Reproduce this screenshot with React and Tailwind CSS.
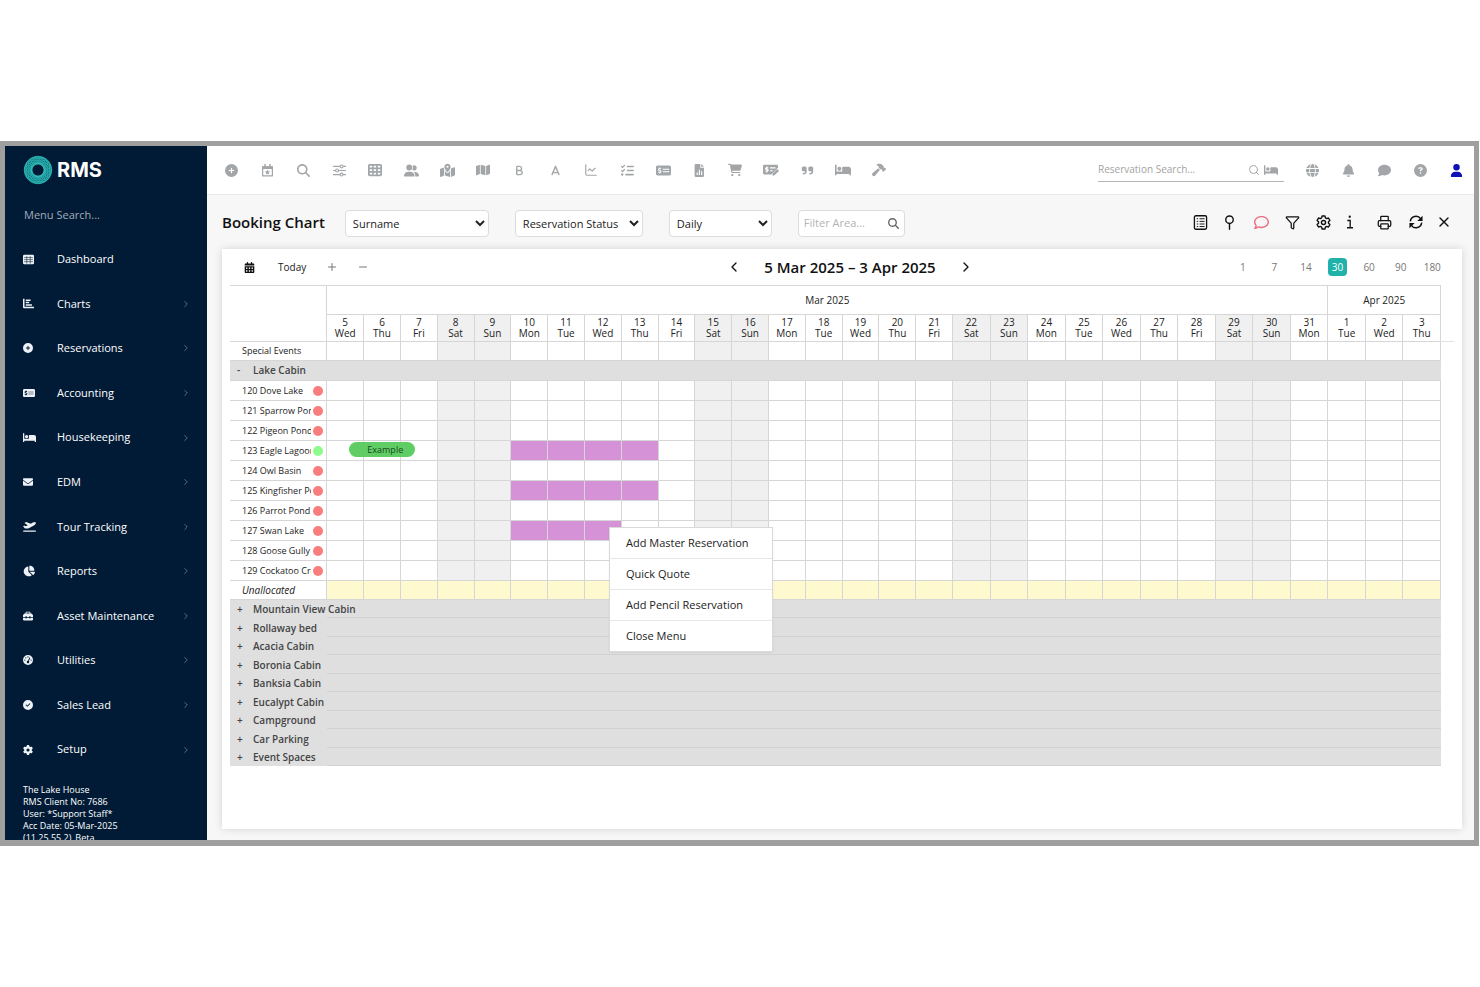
import React, { useState } from 'react';
import {
    FaA,
    FaB,
    FaBed,
    FaBell,
    FaCalendarDays,
    FaCartShopping,
    FaChartPie,
    FaCircleCheck,
    FaCirclePlus,
    FaCircleQuestion,
    FaComment,
    FaEnvelope,
    FaGaugeHigh,
    FaGear,
    FaGlobe,
    FaHammer,
    FaListCheck,
    FaMagnifyingGlass,
    FaMap,
    FaMapLocationDot,
    FaMoneyCheckDollar,
    FaPlaneDeparture,
    FaQuoteRight,
    FaRegComment,
    FaTableCells,
    FaToolbox,
    FaUser,
    FaUserGroup,
} from 'react-icons/fa6';
import { ChartLine, ChevronLeft, ChevronRight, Filter, Minus, Plus, Printer, Search, X } from 'lucide-react';

// Small icons the icon sets don't have
const GridIcon = ({ size }) => (
    <svg width={size} height={size} viewBox="0 0 16 16" aria-hidden="true">
        <rect x="0" y="1" width="16" height="14" rx="2" fill="currentColor" />
        <path d="M1.500 5.200h13M1.500 8.200h13M1.500 11.200h13M5.500 3v11M10.500 3v11" stroke="#011b36" strokeWidth="0.800" />
    </svg>
);

const BarsIcon = ({ size }) => (
    <svg width={size} height={size} viewBox="0 0 16 16" fill="currentColor" aria-hidden="true">
        <path d="M0 1h2.200v11.800H16V15H1.500A1.500 1.500 0 0 1 0 13.500z" />
        <path d="M4 2h7v2.200H4zM4 5.600h5v2.200H4zM4 9.200h9v2.200H4z" />
    </svg>
);

const CalendarStarIcon = ({ size }) => (
    <svg width={size} height={size} viewBox="0 0 16 16" fill="none" aria-hidden="true">
        <path d="M2 3.500h12v11H2z" stroke="currentColor" strokeWidth="1.500" strokeLinejoin="round" />
        <path d="M1.300 3h13.400v3H1.300zM4 0h1.800v4H4zM10.200 0H12v4h-1.800z" fill="currentColor" />
        <path d="m8 7 1 2 2.200.300-1.600 1.500.4 2.200-2-1-2 1 .4-2.200-1.600-1.500L7 9z" fill="currentColor" />
    </svg>
);

const SlidersIcon = ({ size }) => (
    <svg width={size} height={size} viewBox="0 0 16 16" fill="none" stroke="currentColor" strokeWidth="1.400" aria-hidden="true">
        <path d="M0 3h8.500M12.500 3H16M0 8h3M7 8h9M0 13h8.500M12.500 13H16" />
        <circle cx="10.500" cy="3" r="1.800" />
        <circle cx="5" cy="8" r="1.800" />
        <circle cx="10.500" cy="13" r="1.800" />
    </svg>
);

const FileChartIcon = ({ size }) => (
    <svg width={size} height={size} viewBox="0 0 16 16" fill="currentColor" aria-hidden="true">
        <path
            fillRule="evenodd"
            d="M3.500 0H9v4.500h4.500v10A1.500 1.500 0 0 1 12 16H3.500A1.500 1.500 0 0 1 2 14.500v-13A1.500 1.500 0 0 1 3.500 0zM4.500 10.500v3h1.400v-3zM7.200 7v6.500h1.400V7zM9.900 9v4.500h1.400V9z"
        />
        <path d="M10 0l3.500 3.500H10z" />
    </svg>
);

const CheckPenIcon = ({ size }) => (
    <svg width={size} height={size} viewBox="0 0 18 16" fill="none" aria-hidden="true">
        <path
            fillRule="evenodd"
            fill="currentColor"
            d="M1.500 2h14A1.500 1.500 0 0 1 17 3.500v1.800L9.500 13h-8A1.500 1.500 0 0 1 0 11.500v-8A1.500 1.500 0 0 1 1.500 2zM8 5v1.200h6V5zM8 8.200v1.200h3V8.200zM3.800 4v1c-2 .3-1.900 2.600 0 2.900 1.200.3 1 1.100-.9.500l-.4 1.200 1.300.3v.900H5v-1c2-.4 1.900-2.500.1-2.900-1.300-.3-1.100-1 .8-.5l.3-1.200L5 5V4z"
        />
        <path d="M10.500 14.500l.5-2.500 5-5 2 2-5 5z" fill="currentColor" />
    </svg>
);

const ListIcon = ({ size }) => (
    <svg width={size} height={size} viewBox="0 0 16 16" fill="none" stroke="currentColor" strokeWidth="1.400" aria-hidden="true">
        <rect x="1.500" y="0.800" width="13" height="14.400" rx="1.500" />
        <path d="M4 4h1.500M4 6.800h1.500M4 9.600h1.500M4 12.300h1.500M7 4h5.300M7 6.800h5.300M7 9.600h5.300M7 12.300h5.300" strokeWidth="1" />
    </svg>
);

const PinIcon = ({ size }) => (
    <svg width={size} height={size} viewBox="0 0 16 16" fill="none" stroke="currentColor" strokeWidth="1.500" strokeLinecap="round" aria-hidden="true">
        <circle cx="8" cy="5" r="4" />
        <path d="M8 9v6.200" />
    </svg>
);

// Six-lobed gear outline
const SettingsIcon = ({ size }) => (
    <svg width={size} height={size} viewBox="0 0 16 16" fill="none" stroke="currentColor" strokeWidth="1.500" strokeLinejoin="round" aria-hidden="true">
        <path d="M6.500 1h3l.5 2 1.300.8 2-.6 1.500 2.600L13.300 7.200v1.600l1.500 1.400-1.500 2.600-2-.6L10 13l-.5 2h-3L6 13l-1.300-.8-2 .6-1.500-2.600 1.500-1.400V7.200L1.200 5.800l1.500-2.600 2 .6L6 3z" />
        <circle cx="8" cy="8" r="2.200" />
    </svg>
);

const InfoIcon = ({ size }) => (
    <svg width={size} height={size} viewBox="0 0 16 16" fill="none" stroke="currentColor" strokeWidth="1.500" aria-hidden="true">
        <path d="M5 6.300h3.200v8M4.600 14.600h6.800" />
        <circle cx="7.700" cy="2" r="1.300" fill="currentColor" stroke="none" />
    </svg>
);

const SyncIcon = ({ size }) => (
    <svg width={size} height={size} viewBox="0 0 16 16" fill="none" stroke="currentColor" strokeWidth="1.700" aria-hidden="true">
        <path d="M1.500 7.200a6.500 6.500 0 0 1 11.800-3M14.500 8.800a6.500 6.500 0 0 1-11.800 3" />
        <path d="M15.500.8v6H9.500zM.5 15.200v-6h6z" fill="currentColor" stroke="none" />
    </svg>
);

// Ring of overlapping circles
const LogoRing = () => (
    <svg className="size-[30px]" viewBox="0 0 30 30" fill="none" aria-hidden="true">
        <circle cx="15" cy="15" r="9.800" stroke="#0d6d7b" strokeWidth="8" />
        {Array.from({ length: 12 }, (_, i) => {
            const angle = (i * Math.PI) / 6;
            return (
                <circle
                    key={i}
                    cx={15 + 3.800 * Math.cos(angle)}
                    cy={15 + 3.800 * Math.sin(angle)}
                    r="10"
                    stroke="#35c6c0"
                    strokeWidth="0.600"
                />
            );
        })}
    </svg>
);

const menuItems = [
    { label: 'Dashboard', icon: GridIcon, size: 11, leaf: true },
    { label: 'Charts', icon: BarsIcon, size: 11 },
    { label: 'Reservations', icon: FaCirclePlus, size: 10 },
    { label: 'Accounting', icon: FaMoneyCheckDollar, size: 12 },
    { label: 'Housekeeping', icon: FaBed, size: 13 },
    { label: 'EDM', icon: FaEnvelope, size: 10 },
    { label: 'Tour Tracking', icon: FaPlaneDeparture, size: 13 },
    { label: 'Reports', icon: FaChartPie, size: 12 },
    { label: 'Asset Maintenance', icon: FaToolbox, size: 10 },
    { label: 'Utilities', icon: FaGaugeHigh, size: 10 },
    { label: 'Sales Lead', icon: FaCircleCheck, size: 10 },
    { label: 'Setup', icon: FaGear, size: 10 },
];

const shortcuts = [
    { label: 'New reservation', icon: FaCirclePlus, size: 13 },
    { label: 'Events', icon: CalendarStarIcon, size: 13 },
    { label: 'Search', icon: FaMagnifyingGlass, size: 13 },
    { label: 'Rates', icon: SlidersIcon, size: 13 },
    { label: 'Chart', icon: FaTableCells, size: 14 },
    { label: 'Guests', icon: FaUserGroup, size: 15 },
    { label: 'Locations', icon: FaMapLocationDot, size: 15 },
    { label: 'Map', icon: FaMap, size: 14 },
    { label: 'B', icon: FaB, size: 11 },
    { label: 'A', icon: FaA, size: 11 },
    { label: 'Trends', icon: ChartLine, size: 14 },
    { label: 'Tasks', icon: FaListCheck, size: 13 },
    { label: 'Payments', icon: FaMoneyCheckDollar, size: 15 },
    { label: 'Report', icon: FileChartIcon, size: 13 },
    { label: 'Cart', icon: FaCartShopping, size: 14 },
    { label: 'Edit payment', icon: CheckPenIcon, size: 16 },
    { label: 'Quote', icon: FaQuoteRight, size: 13 },
    { label: 'Rooms', icon: FaBed, size: 16 },
    { label: 'Maintenance', icon: FaHammer, size: 14 },
];

const accountLinks = [
    { label: 'Language', icon: FaGlobe },
    { label: 'Notifications', icon: FaBell },
    { label: 'Messages', icon: FaComment },
    { label: 'Help', icon: FaCircleQuestion },
];

const weekdays = ['Wed', 'Thu', 'Fri', 'Sat', 'Sun', 'Mon', 'Tue'];
const days = Array.from({ length: 30 }, (_, i) => ({
    index: i,
    date: i < 27 ? i + 5 : i - 26,
    name: weekdays[i % 7],
    weekend: i % 7 === 3 || i % 7 === 4,
}));

const units = [
    { name: '120 Dove Lake' },
    { name: '121 Sparrow Pond' },
    { name: '122 Pigeon Pond' },
    { name: '123 Eagle Lagoon', clean: true, booking: 'Example', selected: [5, 8] },
    { name: '124 Owl Basin' },
    { name: '125 Kingfisher Pond', selected: [5, 8] },
    { name: '126 Parrot Pond' },
    { name: '127 Swan Lake', selected: [5, 7] },
    { name: '128 Goose Gully' },
    { name: '129 Cockatoo Creek' },
];

const closedGroups = [
    'Mountain View Cabin',
    'Rollaway bed',
    'Acacia Cabin',
    'Boronia Cabin',
    'Banksia Cabin',
    'Eucalypt Cabin',
    'Campground',
    'Car Parking',
    'Event Spaces',
];

const ranges = [1, 7, 14, 30, 60, 90, 180];
const contextItems = ['Add Master Reservation', 'Quick Quote', 'Add Pencil Reservation', 'Close Menu'];

function Sidebar() {
    return (
        <aside className="flex w-[202px] shrink-0 flex-col overflow-hidden bg-[#011b36] text-white [contain:size]">
            <div className="flex h-12 shrink-0 items-center gap-1 pl-[18px]">
                <LogoRing />
                <span className="font-[Inter] text-xl font-bold">RMS</span>
            </div>
            <div className="flex h-[43px] shrink-0 items-center pl-[19px]">
                <input
                    type="text"
                    aria-label="Menu search"
                    placeholder="Menu Search..."
                    className="w-40 bg-transparent text-[11px] outline-none placeholder:text-[#a3abb5]"
                />
            </div>
            <nav className="h-[535px] shrink-0">
                <ul className="flex h-full flex-col">
                    {menuItems.map(({ label, icon: Icon, size, leaf }) => (
                        <li key={label} className="flex-1">
                            <a href="#" className="flex h-full items-center pr-4 pl-[18px] text-[11px]">
                                <span className="w-[34px] text-[#eef1f5]">
                                    <Icon size={size} />
                                </span>
                                <span className="flex-1">{label}</span>
                                {!leaf && <ChevronRight size={10} className="text-[#68778c]" />}
                            </a>
                        </li>
                    ))}
                </ul>
            </nav>
            <div className="shrink-0 pt-3 pl-[18px] text-[9px] leading-3">
                <p>The Lake House</p>
                <p>RMS Client No: 7686</p>
                <p>User: *Support Staff*</p>
                <p>Acc Date: 05-Mar-2025</p>
                <p>(11.25.55.2)_Beta</p>
            </div>
        </aside>
    );
}

function TopBar() {
    return (
        <header className="flex h-[49px] items-center justify-between border-b border-[#ebebeb] bg-white pl-1.5 text-[#a3a6a9]">
            <div className="flex">
                {shortcuts.map(({ label, icon: Icon, size }) => (
                    <button key={label} type="button" aria-label={label} className="flex h-9 w-9 items-center justify-center">
                        <Icon size={size} />
                    </button>
                ))}
            </div>
            <div className="flex items-center">
                <div className="mr-2.5 flex h-6 w-[186px] items-center border-b border-[#b5b5b5]">
                    <input
                        type="text"
                        aria-label="Reservation search"
                        placeholder="Reservation Search..."
                        className="min-w-0 flex-1 bg-transparent text-[10px] outline-none placeholder:text-[#a3a3a3]"
                    />
                    <Search size={12} />
                    <FaBed size={14} className="mr-1.5 ml-1" />
                </div>
                {accountLinks.map(({ label, icon: Icon }) => (
                    <button key={label} type="button" aria-label={label} className="flex h-9 w-9 items-center justify-center">
                        <Icon size={13} />
                    </button>
                ))}
                <button type="button" aria-label="Account" className="flex h-9 w-9 items-center justify-center text-[#0f10b5]">
                    <FaUser size={13} />
                </button>
            </div>
        </header>
    );
}

function FilterBar() {
    return (
        <div className="flex h-[54px] items-center justify-between pl-[15px]">
            <div className="flex items-center gap-5">
                <h1 className="text-[15px] font-semibold text-[#111]">Booking Chart</h1>
                <div className="flex items-center gap-[26px] pt-0.5">
                    <select aria-label="Label" className="h-[27px] w-36 rounded border border-[#dcdcdc] bg-white px-[3px] text-[11px] text-[#222]">
                        <option>Surname</option>
                    </select>
                    <select aria-label="Colour by" className="h-[27px] w-32 rounded border border-[#dcdcdc] bg-white px-[3px] text-[11px] text-[#222]">
                        <option>Reservation Status</option>
                    </select>
                    <select aria-label="Period" className="h-[27px] w-[103px] rounded border border-[#dcdcdc] bg-white px-[3px] text-[11px] text-[#222]">
                        <option>Daily</option>
                    </select>
                    <div className="flex h-[27px] w-[107px] items-center rounded border border-[#dcdcdc] bg-white px-[5px]">
                        <input
                            type="text"
                            aria-label="Filter area"
                            placeholder="Filter Area..."
                            className="min-w-0 flex-1 bg-transparent text-[11px] outline-none placeholder:text-[#b3b3b3]"
                        />
                        <FaMagnifyingGlass size={11} className="text-[#666]" />
                    </div>
                </div>
            </div>
            <div className="flex items-center gap-1 pr-[18px] text-[#111]">
                <div className="flex">
                    <button type="button" aria-label="List" className="flex w-8 justify-center">
                        <ListIcon size={15} />
                    </button>
                    <button type="button" aria-label="Pin" className="flex w-[26px] justify-center">
                        <PinIcon size={15} />
                    </button>
                </div>
                <div className="flex items-center">
                    <button type="button" aria-label="Comments" className="flex w-[31px] justify-center text-[#ee6b85]">
                        <FaRegComment size={15} />
                    </button>
                    <button type="button" aria-label="Filter" className="flex w-[31px] justify-center">
                        <Filter size={15} />
                    </button>
                    <button type="button" aria-label="Settings" className="flex w-[31px] justify-center">
                        <SettingsIcon size={15} />
                    </button>
                    <button type="button" aria-label="Info" className="flex w-[22px] justify-center">
                        <InfoIcon size={14} />
                    </button>
                </div>
                <div className="flex items-center pl-1">
                    <button type="button" aria-label="Print" className="flex w-[31px] justify-center">
                        <Printer size={15} />
                    </button>
                    <button type="button" aria-label="Refresh" className="flex w-[31px] justify-center">
                        <SyncIcon size={14} />
                    </button>
                    <button type="button" aria-label="Close" className="flex w-[25px] justify-center">
                        <X size={16} />
                    </button>
                </div>
            </div>
        </div>
    );
}

function ChartToolbar() {
    const [range, setRange] = useState(30);

    return (
        <div className="mr-[13px] grid h-9 grid-cols-[1fr_auto_1fr] items-center text-[10px]">
            <div className="flex items-center pl-3.5 text-[#777]">
                <button type="button" aria-label="Pick date" className="mr-[23px] text-[#111]">
                    <FaCalendarDays size={11} />
                </button>
                <button type="button" className="mr-5 text-[#222]">Today</button>
                <button type="button" aria-label="Expand" className="mr-[19px]">
                    <Plus size={12} />
                </button>
                <button type="button" aria-label="Collapse">
                    <Minus size={12} />
                </button>
            </div>
            <div className="flex items-center gap-[22px] pl-[22px] text-[#111]">
                <button type="button" aria-label="Previous">
                    <ChevronLeft size={16} />
                </button>
                <h2 className="text-[15px] font-semibold">5 Mar 2025 – 3 Apr 2025</h2>
                <button type="button" aria-label="Next">
                    <ChevronRight size={16} />
                </button>
            </div>
            <div className="flex w-[221px] justify-self-end text-[#777]">
                {ranges.map((n) => (
                    <button key={n} type="button" onClick={() => setRange(n)} className="flex flex-1 justify-center">
                        <span className={range === n ? 'flex h-[18px] w-[19px] items-center justify-center rounded-sm bg-[#20b2aa] text-white' : 'leading-[18px]'}>
                            {n}
                        </span>
                    </button>
                ))}
            </div>
        </div>
    );
}

function DayCells({ selected, booking }) {
    return days.map((day) => {
        const isSelected = selected && day.index >= selected[0] && day.index <= selected[1];
        const color = isSelected ? 'bg-[#d592d7]' : day.weekend ? 'bg-[#f0f0f0]' : '';
        return (
            <td key={day.index} className={`relative border-r border-b border-[#d6d6d6] ${color}`}>
                {booking && day.index === 0 && (
                    <button type="button" className="absolute top-px left-[22px] z-10 h-[15px] w-[66px] rounded-full bg-[#60cd64] pl-1.5 text-[9px] leading-[15px] text-[#174a1c]">
                        {booking}
                    </button>
                )}
            </td>
        );
    });
}

function BookingTable() {
    return (
        <table className="w-full table-fixed border-separate border-spacing-0 text-[10px] text-[#222]">
            <colgroup>
                <col className="w-[95px]" />
                {days.map((day) => (
                    <col key={day.index} className={day.index < 17 ? 'w-[3.04%]' : 'w-[3.1%]'} />
                ))}
            </colgroup>
            <thead>
                <tr className="h-[29px]">
                    <td className="border-r border-[#d6d6d6]" />
                    <th colSpan={27} className="border-r border-b border-[#d6d6d6] font-normal">Mar 2025</th>
                    <th colSpan={3} className="border-r border-b border-[#d6d6d6] font-normal">Apr 2025</th>
                </tr>
                <tr className="h-[27px]">
                    <td className="border-r border-b border-[#d6d6d6]" />
                    {days.map((day) => (
                        <th
                            key={day.index}
                            className={`border-r border-b border-[#d6d6d6] leading-[11px] font-normal ${day.weekend ? 'bg-[#f0f0f0]' : ''} ${
                                day.index === 29 ? 'relative after:absolute after:-bottom-px after:left-full after:h-px after:w-3.5 after:bg-[#e2e2e2]' : ''
                            }`}
                        >
                            {day.date}
                            <br />
                            {day.name}
                        </th>
                    ))}
                </tr>
            </thead>
            <tbody>
                <tr className="h-[19px] text-[9px]">
                    <th className="border-r border-b border-[#d6d6d6] pl-3 text-left leading-[18px] font-normal">Special Events</th>
                    <DayCells />
                </tr>
                <tr className="h-5">
                    <th colSpan={31} className="border-b border-[#d6d6d6] bg-[#dfdfdf] text-left leading-[19px] font-semibold text-[#444]">
                        <button type="button" className="flex items-center">
                            <span className="w-[23px] pl-[7px] text-left">-</span>
                            Lake Cabin
                        </button>
                    </th>
                </tr>
                {units.map((unit) => (
                    <tr key={unit.name} className="h-5 text-[9px]">
                        <th className="border-r border-b border-[#d6d6d6] pl-3 font-normal">
                            <div className="flex items-center gap-0.5">
                                <span className="w-[69px] overflow-hidden text-left leading-[19px] whitespace-nowrap">{unit.name}</span>
                                <span className={`size-2.5 shrink-0 rounded-full ${unit.clean ? 'bg-[#8dfb8d]' : 'bg-[#fa7d7d]'}`} />
                            </div>
                        </th>
                        <DayCells selected={unit.selected} booking={unit.booking} />
                    </tr>
                ))}
                <tr className="h-[19px] bg-[#fef9cf]">
                    <th className="border-r border-b border-[#d6d6d6] bg-white pl-3 text-left leading-[18px] font-normal italic">Unallocated</th>
                    {days.map((day) => (
                        <td key={day.index} className="border-r border-b border-[#d6d6d6]" />
                    ))}
                </tr>
            </tbody>
            <tbody className="bg-[#dfdfdf] text-[#444]">
                {closedGroups.map((name) => (
                    <tr key={name} className="h-[18px] even:h-[19px]">
                        <th className="text-left leading-[18px] font-semibold whitespace-nowrap">
                            <button type="button" className="flex items-center">
                                <span className="w-[23px] pl-[7px] text-left">+</span>
                                {name}
                            </button>
                        </th>
                        <td colSpan={30} className="border-b border-[#d2d2d2]" />
                    </tr>
                ))}
            </tbody>
        </table>
    );
}

function ContextMenu() {
    return (
        <ul className="absolute top-[242px] left-[380px] z-20 w-[162px] bg-white text-[11px] text-[#222] shadow-sm ring-1 ring-[#d9d9d9]">
            {contextItems.map((item) => (
                <li key={item} className="border-b border-[#e6e6e6] last:border-b-0">
                    <button type="button" className="block h-[30px] w-full pl-4 text-left">
                        {item}
                    </button>
                </li>
            ))}
        </ul>
    );
}

export default function App() {
    return (
        <div className="flex min-h-screen flex-col justify-center bg-white font-['Open_Sans',sans-serif]">
            <div className="mr-px flex border-[5px] border-b-[6px] border-[#9f9f9f]">
                <Sidebar />
                <main className="min-w-0 flex-1 bg-[#f7f7f7]">
                    <TopBar />
                    <FilterBar />
                    <section className="mr-3 mb-[11px] ml-[15px] bg-white pr-[21px] pb-[63px] pl-2 shadow-[0_0_8px_rgba(0,0,0,0.15)]">
                        <div className="-mr-5">
                            <ChartToolbar />
                        </div>
                        <div className="relative border-t border-[#d6d6d6]">
                            <BookingTable />
                            <ContextMenu />
                        </div>
                    </section>
                </main>
            </div>
        </div>
    );
}
